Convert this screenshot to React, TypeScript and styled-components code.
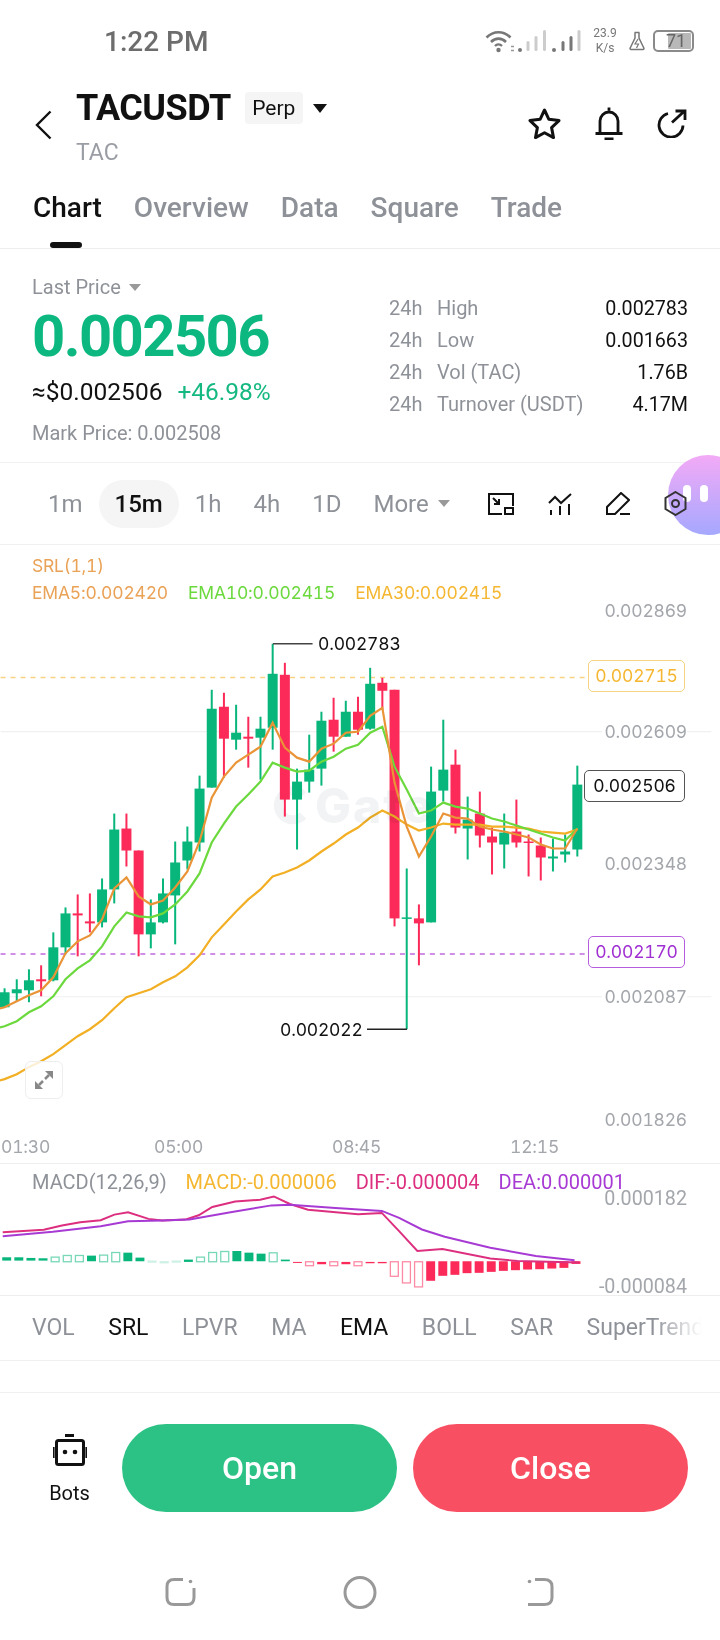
import React from 'react';
import styled, { createGlobalStyle } from 'styled-components';

const UP = '#08b67b';
const DOWN = '#fb2a58';
const GREY = '#8e9298';
const candleX = (i: number) => 4 + 12.206 * i;

// [wick top, body top, body bottom, wick bottom, red?]
const candles: [number, number, number, number, number][] = [
  [989, 993, 1008, 1008, 0], [980, 990, 994, 1002, 0], [970, 981, 991, 1003, 0], [966, 980, 982, 997, 1],
  [933, 948, 981, 982, 0], [908, 914, 948, 955, 0], [895, 914, 916, 957, 1], [894, 922, 924, 933, 1],
  [879, 890, 923, 928, 0], [814, 830, 890, 904, 0], [814, 829, 851, 867, 1], [851, 851, 935, 957, 1],
  [900, 923, 935, 949, 0], [879, 894, 923, 924, 0], [842, 863, 896, 945, 0], [827, 842, 861, 870, 0],
  [776, 789, 843, 852, 0], [690, 709, 788, 788, 0], [693, 707, 739, 778, 1], [705, 733, 740, 750, 0],
  [717, 737, 739, 768, 1], [717, 729, 738, 780, 0], [644, 674, 728, 750, 0], [663, 675, 800, 817, 1],
  [769, 782, 800, 850, 0], [735, 770, 782, 793, 0], [712, 721, 769, 786, 0], [698, 720, 737, 752, 1],
  [701, 712, 737, 737, 0], [697, 712, 730, 735, 1], [668, 684, 729, 730, 0], [678, 683, 691, 710, 1],
  [690, 690, 919, 927, 1], [869, 918, 919, 1030, 0], [905, 919, 924, 966, 1], [767, 792, 923, 923, 0],
  [720, 770, 791, 802, 0], [750, 765, 828, 834, 1], [797, 820, 829, 860, 0], [792, 814, 836, 848, 1],
  [828, 837, 843, 875, 1], [814, 833, 845, 869, 0], [800, 832, 843, 848, 1], [835, 842, 843, 877, 1],
  [838, 846, 858, 881, 1], [839, 857, 859, 872, 0], [835, 852, 855, 863, 0], [766, 785, 850, 857, 0],
];

const ema5 = [1008, 1002, 996, 991, 978, 954, 942, 936, 920, 889, 878, 897, 905, 901, 888, 872, 842, 798, 777, 763, 755, 747, 723, 748, 758, 762, 749, 744, 733, 732, 716, 708, 783, 827, 857, 837, 814, 818, 819, 827, 830, 832, 835, 838, 845, 849, 849, 829];
const ema10 = [1027, 1022, 1013, 1007, 997, 980, 969, 961, 947, 927, 913, 917, 918, 914, 905, 892, 874, 843, 824, 807, 795, 782, 763, 768, 772, 771, 762, 757, 749, 745, 733, 727, 767, 790, 814, 811, 803, 807, 809, 814, 819, 822, 826, 830, 834, 838, 841, 829];
const ema30 = [1080, 1075, 1068, 1062, 1055, 1046, 1037, 1030, 1021, 1009, 998, 994, 990, 983, 977, 968, 956, 938, 925, 912, 900, 890, 877, 873, 868, 861, 852, 844, 835, 828, 818, 811, 817, 825, 831, 828, 824, 825, 825, 825, 827, 827, 828, 829, 832, 833, 834, 830];

const toLine = (ys: number[]) => `M-8 ${ys[0] + 3}` + ys.map((y, i) => ` L${candleX(i).toFixed(1)} ${y}`).join('');

// zoomed trace of the MACD lines, x in px, y in px
const scalePts = (pts: number[][]) =>
  pts.map(([x, y], i) => `${i ? 'L' : 'M'}${(x / 2.178).toFixed(1)} ${(1150 + y / 3).toFixed(1)}`).join(' ');

const dif = scalePts([[0, 248], [90, 241], [130, 228], [170, 218], [215, 212], [245, 195], [275, 188], [320, 208], [350, 213], [400, 210], [430, 197], [460, 172], [510, 155], [565, 150], [595, 140], [630, 163], [670, 180], [725, 187], [780, 194], [832, 190], [870, 245], [910, 305], [965, 299], [1070, 328], [1130, 335], [1265, 340]]);
const dea = scalePts([[0, 260], [110, 247], [215, 230], [275, 215], [350, 213], [410, 210], [500, 188], [590, 167], [630, 165], [730, 175], [832, 184], [870, 205], [920, 240], [970, 262], [1070, 295], [1170, 320], [1255, 333]]);

// [top, bottom, hollow?]
const hist: [number, number, number][] = [
  [324, 334, 0], [324, 334, 0], [326, 334, 0], [327, 334, 0], [322, 336, 1], [317, 336, 1], [317, 336, 1], [319, 336, 0],
  [316, 336, 1], [308, 336, 1], [310, 336, 0], [325, 336, 0], [334, 337, 1], [336, 338, 1], [334, 336, 1], [331, 338, 0],
  [322, 336, 1], [308, 336, 1], [305, 336, 1], [305, 336, 0], [310, 336, 0], [313, 336, 0], [309, 336, 1], [331, 336, 0],
  [338, 341, 0], [336, 348, 1], [338, 345, 0], [336, 348, 1], [338, 345, 0], [336, 348, 1], [338, 342, 0], [338, 342, 0],
  [336, 380, 1], [336, 400, 1], [336, 412, 1], [336, 395, 0], [336, 380, 0], [336, 377, 0], [336, 372, 0], [336, 371, 0],
  [336, 368, 0], [336, 365, 0], [336, 363, 0], [336, 361, 0], [336, 360, 0], [336, 358, 0], [336, 356, 0], [336, 344, 0],
];

export default function App() {
  return (
    <Page>
      <GlobalStyle />
      <StatusBar>
        <Clock>1:22 PM</Clock>
        <StatusIcons>
          <svg width="96" height="24" viewBox="0 0 96 24" fill="none">
            <path d="M1.5 8.5C8.5 1.5 18.5 1.5 25.5 8.5" stroke="#777" strokeWidth="2.6" />
            <path d="M6 13C10.5 8.5 16.5 8.5 21 13" stroke="#777" strokeWidth="2.6" />
            <path d="M10 17C12 15 15 15 17 17" stroke="#777" strokeWidth="2.4" />
            <circle cx="13.5" cy="21" r="2.2" fill="#777" />
            <path d="M26 17.5h3M26 21.5h3" stroke="#999" strokeWidth="1.6" />
            <circle cx="35" cy="21" r="2" fill="#777" />
            <rect x="41.5" y="12" width="3" height="10" rx="1.5" fill="#ccc" />
            <rect x="49.5" y="7" width="3" height="15" rx="1.5" fill="#ccc" />
            <rect x="58" y="1" width="3" height="21" rx="1.5" fill="#ccc" />
            <circle cx="69" cy="21" r="2" fill="#777" />
            <rect x="76.5" y="12" width="3" height="10" rx="1.5" fill="#777" />
            <rect x="84.5" y="7" width="3" height="15" rx="1.5" fill="#777" />
            <rect x="92.5" y="1" width="3" height="21" rx="1.5" fill="#ccc" />
          </svg>
          <NetSpeed>
            <span>23.9</span>
            <span>K/s</span>
          </NetSpeed>
          <svg width="16" height="20" viewBox="0 0 16 20" fill="none">
            <path d="M5.5 1.5h5M6 1.5v5.5L1.2 17a1 1 0 0 0 1 1.5h11.6a1 1 0 0 0 1-1.5L10 7V1.5" stroke="#777" strokeWidth="1.5" />
            <path d="M9 8l-3 5h3.5l-2 4" stroke="#777" strokeWidth="1.2" />
          </svg>
          <Battery>
            <BatteryFill style={{ width: '65%' }} />
            <BatteryLevel>71</BatteryLevel>
          </Battery>
        </StatusIcons>
      </StatusBar>

      <Header>
        <BackButton>
          <svg width="17" height="30" viewBox="0 0 17 30" fill="none">
            <path d="M15.5 1.5L2 15l13.5 13.5" stroke="#111" strokeWidth="2.4" />
          </svg>
        </BackButton>
        <TitleBlock>
          <TitleRow>
            <Symbol>TACUSDT</Symbol>
            <Chip>Perp</Chip>
            <DownArrow $size={7} $color="#111" />
          </TitleRow>
          <BaseCoin>TAC</BaseCoin>
        </TitleBlock>
        <HeaderActions>
          <svg width="33" height="31" viewBox="0 0 33 31" fill="none">
            <path d="M16.5 2l4.4 9.3 10.1 1.3-7.4 7 1.9 10-9-4.8-9 4.8 1.900-10-7.400-7 10.100-1.300z" stroke="#111" strokeWidth="3" strokeLinejoin="round" />
          </svg>
          <svg width="28" height="33" viewBox="0 0 28 33" fill="none">
            <path d="M14 0.500v3M5 26V14a9 9 0 0 1 18 0v12M0.500 26.500h27M9.500 32h9" stroke="#111" strokeWidth="2.800" />
          </svg>
          <svg width="30" height="29" viewBox="0 0 30 29" fill="none">
            <path d="M11 4.500A12 12 0 1 0 26 16.500" stroke="#111" strokeWidth="2.800" />
            <path d="M15 13.500L27.500 2M18.500 2H28v9" stroke="#111" strokeWidth="2.800" />
          </svg>
        </HeaderActions>
      </Header>

      <Tabs>
        <Tab $active>Chart</Tab>
        <Tab>Overview</Tab>
        <Tab>Data</Tab>
        <Tab>Square</Tab>
        <Tab>Trade</Tab>
      </Tabs>

      <PriceSection>
        <PriceLeft>
          <LastPrice>
            Last Price <DownArrow $size={6} $color="#999" />
          </LastPrice>
          <BigPrice>0.002506</BigPrice>
          <PriceSub>
            <span>≈$0.002506</span>
            <Change>+46.98%</Change>
          </PriceSub>
          <MarkPrice>Mark Price: 0.002508</MarkPrice>
        </PriceLeft>
        <Stats>
          <StatRow label="High" value="0.002783" />
          <StatRow label="Low" value="0.001663" />
          <StatRow label="Vol (TAC)" value="1.76B" />
          <StatRow label="Turnover (USDT)" value="4.17M" />
        </Stats>
      </PriceSection>

      <TimeRow>
        <Interval>1m</Interval>
        <Interval $active>15m</Interval>
        <Interval>1h</Interval>
        <Interval>4h</Interval>
        <Interval>1D</Interval>
        <Interval>
          More <DownArrow $size={6} $color="#999" />
        </Interval>
        <ChartTools>
          <svg width="26" height="22" viewBox="0 0 26 22" fill="none" stroke="#111" strokeWidth="2">
            <path d="M14 21H1V1h24v12M5 5l6 6M11 6v5H6" />
            <rect x="17" y="15" width="8" height="6" />
          </svg>
          <svg width="24" height="22" viewBox="0 0 24 22" fill="none" stroke="#111" strokeWidth="2">
            <path d="M1 10l6-6 6 6L23 1M3 17v5M12 13v9M21 11v11" />
          </svg>
          <svg width="24" height="23" viewBox="0 0 24 23" fill="none" stroke="#111" strokeWidth="2">
            <path d="M1 22v-7L15 1l8 7-14 14zM14 22h10" />
          </svg>
          <svg width="23" height="25" viewBox="0 0 23 25" fill="none" stroke="#333" strokeWidth="2">
            <path d="M11.500 1l10 6v11l-10 6-10-6V7z" />
            <circle cx="11.500" cy="12.500" r="3.500" />
          </svg>
        </ChartTools>
      </TimeRow>

      <ChartPanel>
        <ChartCanvas viewBox="0 545 720 619">
          <path d="M0 732H712M0 997.500H712" stroke="#eef0f2" strokeWidth="1.200" />
          <path d="M303 795.500A14.500 14.500 0 1 0 303 816" fill="none" stroke="#f1f3f5" strokeWidth="9" />
          <path d="M0 677.700H588" stroke="#f7d382" strokeWidth="1.500" strokeDasharray="5 5" />
          <path d="M0 954.700H588" stroke="#c26ae0" strokeWidth="1.500" strokeDasharray="5 5" />
          {candles.map(([wt, bt, bb, wb, red], i) => {
            const x = candleX(i);
            const color = red ? DOWN : UP;
            return (
              <g key={i} fill={color}>
                <rect x={x - 1} y={wt} width={2} height={wb - wt} />
                <rect x={x - 5} y={bt} width={10} height={Math.max(bb - bt, 1.500)} />
              </g>
            );
          })}
          <path d="M272.700 644H312.500" stroke="#444" strokeWidth="1.500" />
          <path d="M367 1030H407" stroke="#222" strokeWidth="1.500" />
          <path d={toLine(ema30)} fill="none" stroke="#f2af24" strokeWidth="2.200" />
          <path d={toLine(ema10)} fill="none" stroke="#6bd93d" strokeWidth="2.200" />
          <path d={toLine(ema5)} fill="none" stroke="#ea9438" strokeWidth="2.200" />
        </ChartCanvas>
        <Watermark>Gate</Watermark>

        <Legend>
          <LegendLine>
            <LegendItem $color="#eaa257">SRL(1,1)</LegendItem>
          </LegendLine>
          <LegendLine>
            <LegendItem $color="#eaa257">EMA5:0.002420</LegendItem>
            <LegendItem $color="#6bd93d">EMA10:0.002415</LegendItem>
            <LegendItem $color="#f5b731">EMA30:0.002415</LegendItem>
          </LegendLine>
        </Legend>

        <AxisPrice $y={611}>0.002869</AxisPrice>
        <AxisPrice $y={732}>0.002609</AxisPrice>
        <AxisPrice $y={864}>0.002348</AxisPrice>
        <AxisPrice $y={997}>0.002087</AxisPrice>
        <AxisPrice $y={1120}>0.001826</AxisPrice>

        <PriceTag $y={674.500} $color="#f5b731" $border="#f7d382" $left={588}>0.002715</PriceTag>
        <PriceTag $y={785} $color="#111" $border="#555" $left={584}>0.002506</PriceTag>
        <PriceTag $y={951} $color="#a02fd2" $border="#b65cdc" $left={588}>0.002170</PriceTag>

        <Extreme $x={318} $y={644}>0.002783</Extreme>
        <Extreme $x={280} $y={1030}>0.002022</Extreme>

        <ExpandButton>
          <svg width="18" height="18" viewBox="0 0 18 18" fill="#888">
            <path d="M10 0h8v8zM0 10v8h8z" />
            <path d="M4 14l4-4M10 8l4-4" stroke="#888" strokeWidth="2.500" />
          </svg>
        </ExpandButton>

        <AxisTime $x={1}>01:30</AxisTime>
        <AxisTime $x={154}>05:00</AxisTime>
        <AxisTime $x={332}>08:45</AxisTime>
        <AxisTime $x={510}>12:15</AxisTime>
      </ChartPanel>

      <MacdPanel>
        <ChartCanvas viewBox="0 1164 720 132">
          {hist.map(([t, b, hollow], i) => {
            const x = candleX(i);
            const y = 1150 + t / 3;
            const h = Math.max((b - t) / 3, 1);
            const color = i < 24 ? UP : DOWN;
            return hollow ? (
              <rect key={i} x={x - 4} y={y + 0.500} width={8} height={h} fill="#fff" stroke={color} strokeOpacity={h < 2 ? 0.2 : 0.55} strokeWidth={1.300} />
            ) : (
              <rect key={i} x={x - 4.500} y={y} width={9} height={h} fill={color} />
            );
          })}
          <path d={dif} fill="none" stroke="#dd2f7f" strokeWidth="2" />
          <path d={dea} fill="none" stroke="#a83ad4" strokeWidth="2" />
        </ChartCanvas>
        <MacdLegend>
          <MacdItem $color="#8e9298">MACD(12,26,9)</MacdItem>
          <MacdItem $color="#f5b731">MACD:-0.000006</MacdItem>
          <MacdItem $color="#dd2f7f">DIF:-0.000004</MacdItem>
          <MacdItem $color="#a83ad4">DEA:0.000001</MacdItem>
        </MacdLegend>
        <MacdAxis $top={23}>0.000182</MacdAxis>
        <MacdAxis $top={111}>-0.000084</MacdAxis>
      </MacdPanel>

      <IndicatorRow>
        <IndicatorScroll>
          <Indicator>VOL</Indicator>
          <Indicator $on>SRL</Indicator>
          <Indicator>LPVR</Indicator>
          <Indicator>MA</Indicator>
          <Indicator $on>EMA</Indicator>
          <Indicator>BOLL</Indicator>
          <Indicator>SAR</Indicator>
          <Indicator>SuperTrend</Indicator>
        </IndicatorScroll>
      </IndicatorRow>
      <Gap />

      <ActionBar>
        <Bots>
          <svg width="34" height="32" viewBox="0 0 34 32" fill="none">
            <path d="M12 1.500h9" stroke="#111" strokeWidth="3" />
            <rect x="3.500" y="6.500" width="27" height="24" rx="2" stroke="#111" strokeWidth="3" />
            <path d="M0.800 13v11M33.200 13v11" stroke="#111" strokeWidth="1.600" />
            <circle cx="12" cy="18" r="2.300" fill="#111" />
            <circle cx="22" cy="18" r="2.300" fill="#111" />
          </svg>
          <BotsLabel>Bots</BotsLabel>
        </Bots>
        <TradeButton $color="#2dc285">Open</TradeButton>
        <TradeButton $color="#f94f62">Close</TradeButton>
      </ActionBar>

      <NavBar>
        <NavCell>
          <svg width="33" height="30" viewBox="0 0 33 30" fill="none" stroke="#999" strokeWidth="3">
            <path d="M19 2.500h-9Q3 2.500 3 9.500v11Q3 27.500 10 27.500h13Q30 27.500 30 20.500V11" />
            <circle cx="26.500" cy="4.500" r="1.800" fill="#999" stroke="none" />
          </svg>
        </NavCell>
        <NavCell>
          <svg width="34" height="33" viewBox="0 0 34 33" fill="none">
            <circle cx="17" cy="16.500" r="15" stroke="#999" strokeWidth="3" />
          </svg>
        </NavCell>
        <NavCell>
          <svg width="27" height="30" viewBox="0 0 27 30" fill="none" stroke="#999" strokeWidth="3">
            <path d="M8 2.500h9Q25 2.500 25 9.500v11Q25 27.500 17 27.500H1" />
            <circle cx="2.500" cy="4.500" r="1.800" fill="#999" stroke="none" />
          </svg>
        </NavCell>
      </NavBar>

      <Bubble>
        <BubbleDot />
        <BubbleDot />
      </Bubble>
    </Page>
  );
}

function StatRow({ label, value }: { label: string; value: string }) {
  return (
    <StatLine>
      <StatPrefix>24h</StatPrefix>
      <StatLabel>{label}</StatLabel>
      <StatValue>{value}</StatValue>
    </StatLine>
  );
}

const GlobalStyle = createGlobalStyle`
  html, body {
    margin: 0;
    padding: 0;
    background: #fff;
  }
  * {
    box-sizing: border-box;
  }
`;

const Page = styled.div`
  position: relative;
  width: 720px;
  height: 1640px;
  overflow: hidden;
  background: #fff;
  color: #111;
  font-family: Roboto, 'Liberation Sans', sans-serif;
`;

const StatusBar = styled.div`
  height: 82px;
  padding: 0 26px 0 104px;
  display: flex;
  align-items: center;
  justify-content: space-between;
`;

const Clock = styled.div`
  font-size: 28px;
  font-weight: 500;
  color: #6d6d6d;
`;

const StatusIcons = styled.div`
  display: flex;
  align-items: center;
  gap: 11px;
`;

const NetSpeed = styled.div`
  width: 26px;
  display: flex;
  flex-direction: column;
  align-items: center;
  font-size: 12px;
  line-height: 15px;
  color: #777;
`;

const Battery = styled.div`
  position: relative;
  width: 41px;
  height: 22px;
  margin-left: -3px;
  border: 2px solid #8a8a8a;
  border-radius: 5px;
  display: flex;
  justify-content: flex-end;
  padding: 1px;
`;

const BatteryFill = styled.div`
  background: #b8b8b8;
  border-radius: 1px;
`;

const BatteryLevel = styled.span`
  position: absolute;
  left: 11px;
  top: -2px;
  font-size: 18px;
  line-height: 22px;
  color: #666;
`;

const Header = styled.div`
  height: 88px;
  padding: 6px 33px 0 35px;
  display: flex;
  align-items: flex-start;
`;

const BackButton = styled.div`
  margin-top: 22px;
  margin-right: 24px;
  display: flex;
`;

const TitleBlock = styled.div`
  display: flex;
  flex-direction: column;
`;

const TitleRow = styled.div`
  display: flex;
  align-items: center;
  height: 40px;
`;

const Symbol = styled.div`
  font-size: 36px;
  font-weight: 700;
  letter-spacing: -0.5px;
`;

const Chip = styled.div`
  margin: 0 10px 0 14px;
  width: 58px;
  height: 32px;
  border-radius: 4px;
  background: #f5f5f5;
  font-size: 21px;
  line-height: 32px;
  text-align: center;
`;

const DownArrow = styled.i<{ $size: number; $color: string }>`
  display: inline-block;
  width: 0;
  height: 0;
  border-left: ${p => p.$size}px solid transparent;
  border-right: ${p => p.$size}px solid transparent;
  border-top: ${p => p.$size * 1.3}px solid ${p => p.$color};
`;

const BaseCoin = styled.div`
  margin-top: 12px;
  font-size: 23px;
  line-height: 26px;
  color: #9a9ea4;
`;

const HeaderActions = styled.div`
  margin: 19px 0 0 auto;
  display: flex;
  align-items: center;
  gap: 34px;
`;

const Tabs = styled.div`
  height: 79px;
  padding: 20px 0 0 33px;
  display: flex;
  gap: 32px;
  border-bottom: 1px solid #eee;
`;

const Tab = styled.div<{ $active?: boolean }>`
  position: relative;
  height: 59px;
  font-size: 28px;
  line-height: 36px;
  font-weight: 500;
  color: ${p => (p.$active ? '#111' : GREY)};

  &::after {
    content: '';
    display: ${p => (p.$active ? 'block' : 'none')};
    position: absolute;
    left: 17px;
    top: 52px;
    width: 32px;
    height: 6px;
    border-radius: 3px;
    background: #111;
  }
`;

const PriceSection = styled.div`
  height: 214px;
  padding: 0 32px;
  display: flex;
  justify-content: space-between;
  border-bottom: 1px solid #f0f0f0;
`;

const PriceLeft = styled.div`
  padding-top: 25px;
`;

const LastPrice = styled.div`
  display: flex;
  align-items: center;
  gap: 8px;
  font-size: 20px;
  line-height: 26px;
  color: ${GREY};
`;

const BigPrice = styled.div`
  margin-top: 6px;
  font-size: 58px;
  line-height: 60px;
  font-weight: 700;
  letter-spacing: -1.600px;
  color: #0cb880;
`;

const PriceSub = styled.div`
  margin-top: 11px;
  display: flex;
  gap: 15px;
  font-size: 24.500px;
  line-height: 30px;
`;

const Change = styled.span`
  color: #14b880;
`;

const MarkPrice = styled.div`
  margin-top: 13px;
  font-size: 20px;
  line-height: 26px;
  color: ${GREY};
`;

const Stats = styled.div`
  width: 299px;
  padding-top: 43px;
`;

const StatLine = styled.div`
  height: 32px;
  display: flex;
  align-items: center;
  font-size: 20px;
`;

const StatPrefix = styled.span`
  width: 48px;
  color: ${GREY};
`;

const StatLabel = styled.span`
  color: ${GREY};
`;

const StatValue = styled.span`
  margin-left: auto;
  font-size: 19.700px;
  color: #111;
`;

const TimeRow = styled.div`
  height: 82px;
  padding: 0 33px 0 32px;
  display: flex;
  align-items: center;
  border-bottom: 1px solid #f0f0f0;
`;

const Interval = styled.div<{ $active?: boolean }>`
  height: 48px;
  padding: 0 16px;
  display: flex;
  align-items: center;
  gap: 9px;
  border-radius: 24px;
  font-size: 24px;
  font-weight: ${p => (p.$active ? 500 : 400)};
  color: ${p => (p.$active ? '#111' : GREY)};
  background: ${p => (p.$active ? '#f5f5f5' : 'transparent')};
`;

const ChartTools = styled.div`
  position: relative;
  z-index: 2;
  margin-left: auto;
  display: flex;
  align-items: center;
  gap: 34px;
`;

const ChartPanel = styled.div`
  position: relative;
  height: 619px;
  padding: 7px 0 0 32px;
  border-bottom: 1px solid #eee;
  font-family: Inter, Roboto, sans-serif;
  font-size: 17.500px;
  font-variant-numeric: tabular-nums;
  letter-spacing: -0.200px;
`;

const ChartCanvas = styled.svg`
  position: absolute;
  left: 0;
  top: 0;
  width: 720px;
  height: 100%;
`;

const Legend = styled.div`
  position: relative;
`;

const LegendLine = styled.div`
  display: flex;
  gap: 20px;
  height: 27px;
  align-items: center;
`;

const LegendItem = styled.span<{ $color: string }>`
  color: ${p => p.$color};
`;

const Watermark = styled.div`
  position: absolute;
  left: 315px;
  top: 236px;
  font-size: 48px;
  line-height: 50px;
  font-weight: 800;
  letter-spacing: 2px;
  color: #f1f3f5;
  mix-blend-mode: multiply;
`;

const AxisPrice = styled.div<{ $y: number }>`
  position: absolute;
  right: 33px;
  top: ${p => p.$y - 545 - 12}px;
  padding-left: 2px;
  background: #fff;
  line-height: 24px;
  color: #a3a6ab;
`;

const PriceTag = styled.div<{ $y: number; $color: string; $border: string; $left: number }>`
  position: absolute;
  left: ${p => p.$left}px;
  top: ${p => p.$y - 545 - 15}px;
  width: ${p => 685 - p.$left}px;
  height: 32px;
  border: 1px solid ${p => p.$border};
  border-radius: 5px;
  background: #fff;
  line-height: 30px;
  text-align: center;
  color: ${p => p.$color};
`;

const Extreme = styled.div<{ $x: number; $y: number }>`
  position: absolute;
  left: ${p => p.$x}px;
  top: ${p => p.$y - 545 - 12}px;
  line-height: 24px;
  color: #111;
`;

const ExpandButton = styled.div`
  position: absolute;
  left: 25px;
  top: 516px;
  width: 38px;
  height: 38px;
  border: 1.500px solid #eee;
  border-radius: 6px;
  background: rgba(255, 255, 255, 0.8);
  display: flex;
  align-items: center;
  justify-content: center;
`;

const AxisTime = styled.div<{ $x: number }>`
  position: absolute;
  left: ${p => p.$x}px;
  top: 590px;
  line-height: 24px;
  color: #a3a6ab;
`;

const MacdPanel = styled.div`
  position: relative;
  height: 132px;
  padding: 5px 0 0 32px;
  border-bottom: 1px solid #eee;
`;

const MacdLegend = styled.div`
  position: relative;
  display: flex;
  gap: 19px;
  height: 26px;
  align-items: center;
`;

const MacdItem = styled.span<{ $color: string }>`
  font-size: 20px;
  color: ${p => p.$color};
`;

const MacdAxis = styled.div<{ $top: number }>`
  position: absolute;
  right: 33px;
  top: ${p => p.$top}px;
  font-size: 19.700px;
  line-height: 24px;
  color: #a3a6ab;
`;

const IndicatorRow = styled.div`
  height: 65px;
  padding-right: 18px;
  display: flex;
  align-items: center;
  border-bottom: 1px solid #f0f0f0;
`;

const IndicatorScroll = styled.div`
  flex: 1;
  min-width: 0;
  padding-left: 32px;
  display: flex;
  gap: 33.500px;
  overflow: hidden;
  mask-image: linear-gradient(to right, #000 93%, transparent 100%);
`;

const Indicator = styled.span<{ $on?: boolean }>`
  flex-shrink: 0;
  font-size: 23px;
  line-height: 30px;
  color: ${p => (p.$on ? '#111' : GREY)};
`;

const Gap = styled.div`
  height: 32px;
  border-bottom: 1px solid #f0f0f0;
`;

const ActionBar = styled.div`
  height: 151px;
  padding: 31px 32px 0 50px;
  display: flex;
  align-items: flex-start;
  gap: 16px;
`;

const Bots = styled.div`
  width: 39px;
  margin-right: 17px;
  padding-top: 10px;
  display: flex;
  flex-direction: column;
  align-items: center;
`;

const BotsLabel = styled.div`
  margin-top: 14px;
  font-size: 20px;
  line-height: 26px;
`;

const TradeButton = styled.div<{ $color: string }>`
  flex: 1;
  height: 88px;
  border-radius: 44px;
  background: ${p => p.$color};
  display: flex;
  align-items: center;
  justify-content: center;
  color: #fff;
  font-size: 32px;
  font-weight: 500;
`;

const NavBar = styled.div`
  height: 96px;
  display: flex;
  justify-content: center;
  align-items: center;
`;

const NavCell = styled.div`
  width: 180px;
  display: flex;
  justify-content: center;
`;

const Bubble = styled.div`
  position: absolute;
  left: 668px;
  top: 455px;
  width: 80px;
  height: 80px;
  border-radius: 50%;
  background: linear-gradient(180deg, #f3aaf6, #a5a8ff);
  display: flex;
  gap: 9px;
  padding: 30px 0 0 15px;
`;

const BubbleDot = styled.div`
  width: 8px;
  height: 17px;
  border-radius: 4px;
  background: #fff;
`;
